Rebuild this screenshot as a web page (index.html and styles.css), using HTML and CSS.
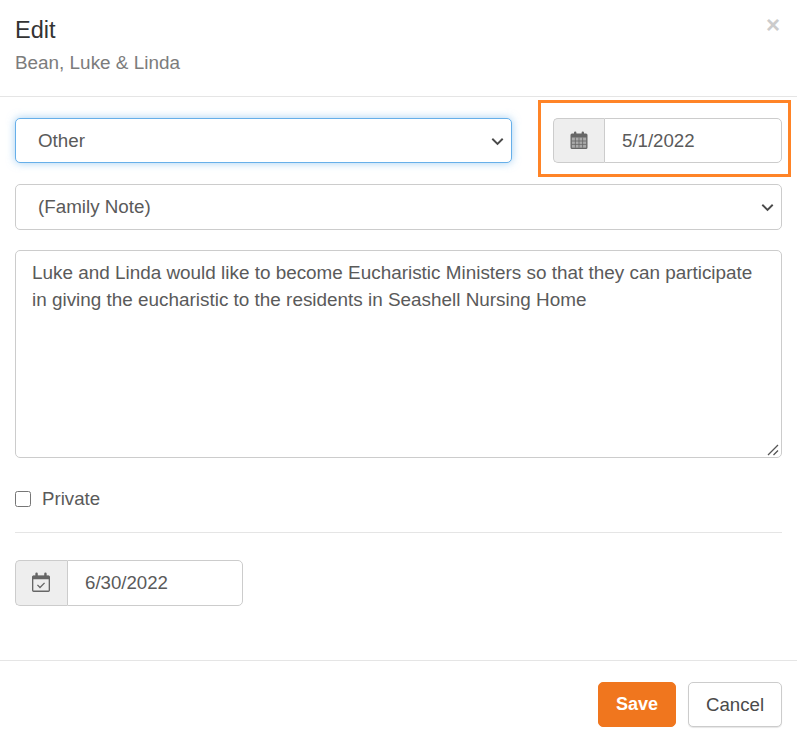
FILE: index.html
```html
<!DOCTYPE html>
<html lang="en">
<head>
  <meta charset="UTF-8">
  <meta name="viewport" content="width=device-width, initial-scale=1.0">
  <title>Edit</title>
  <link rel="stylesheet" href="styles.css">
</head>
<body>
  <div class="modal">
    <div class="modal-header">
      <div>
        <h4>Edit</h4>
        <div class="subtitle">Bean, Luke &amp; Linda</div>
      </div>
      <span class="close">&times;</span>
    </div>

    <div class="modal-body">
      <div class="top-row">
        <div class="select-wrap">
          <select class="field focused">
            <option>Other</option>
          </select>
          <svg class="chevron" viewBox="0 0 12 8"><path d="M1.200 1.500 6 6.200l4.800-4.700" /></svg>
        </div>

        <div class="date-group date-first">
          <span class="addon">
            <svg viewBox="0 0 18 18"><path class="solid" d="M2 2.500h2V1.800a1.200 1.200 0 0 1 2.400 0v.7h5.200v-.7a1.200 1.200 0 0 1 2.400 0v.7h2A1.500 1.500 0 0 1 17.500 4v12.500A1.500 1.500 0 0 1 16 18H2a1.500 1.500 0 0 1-1.500-1.500V4A1.500 1.500 0 0 1 2 2.500Z" /><path class="grid-bg" d="M1.800 6.500h14.400v10.200H1.800Z" /><path class="grid" d="M1.800 10h14.400M1.800 13.400h14.400M5.400 6.500v10.200M9 6.500v10.200M12.600 6.500v10.200" /></svg>
          </span>
          <input class="field" type="text" value="5/1/2022">
        </div>
      </div>

      <div class="select-wrap note-select">
        <select class="field">
          <option>(Family Note)</option>
        </select>
        <svg class="chevron" viewBox="0 0 12 8"><path d="M1.200 1.500 6 6.200l4.800-4.700" /></svg>
      </div>

      <div class="note-wrap">
        <textarea class="field note-text">Luke and Linda would like to become Eucharistic Ministers so that they can participate in giving the eucharistic to the residents in Seashell Nursing Home</textarea>
        <svg class="grip" viewBox="0 0 12 12"><path d="M1 11 11 1M6.500 11 11 6.500" /></svg>
      </div>

      <label class="private">
        <input type="checkbox">
        Private
      </label>

      <hr>

      <div class="date-group date-second">
        <span class="addon">
          <svg viewBox="0 0 18 18"><path class="outline" d="M2.300 3.700h13.400a.8.8 0 0 1 .8.800v12a.8.8 0 0 1-.8.800H2.300a.8.8 0 0 1-.8-.8v-12a.8.8 0 0 1 .8-.8Z" /><path class="solid" d="M1.500 3.300h15v3.200h-15ZM3.900 1.500a1.100 1.100 0 0 1 2.200 0V4H3.900ZM11.900 1.500a1.100 1.100 0 0 1 2.200 0V4h-2.200Z" /><path class="outline" d="m5.800 11.600 2.300 2.300 4.100-4.100" /></svg>
        </span>
        <input class="field" type="text" value="6/30/2022">
      </div>
    </div>

    <div class="modal-footer">
      <button class="btn btn-save">Save</button>
      <button class="btn btn-cancel">Cancel</button>
    </div>
  </div>

  <div class="highlight"></div>
</body>
</html>
```

FILE: styles.css
```css
* {
  box-sizing: border-box;
}

body {
  margin: 0;
  background-color: #fff;
  font-family: "Liberation Sans", Arial, sans-serif;
  font-size: 18.67px;
  color: #5a5a5a;
}

.modal {
  width: 797px;
  height: 741px;
  display: flex;
  flex-direction: column;
}

.modal-header {
  height: 97px;
  padding: 17px 15px 0;
  display: flex;
  justify-content: space-between;
  border-bottom: 1px solid #e5e5e5;
}

h4 {
  margin: 0;
  font-size: 23.5px;
  font-weight: 400;
  line-height: 26px;
  color: #333;
}

.subtitle {
  margin-top: 8px;
  font-size: 18.9px;
  line-height: 24px;
  color: #7c7c7c;
}

.close {
  margin: -4px 2px 0 0;
  font-size: 24px;
  font-weight: 700;
  line-height: 24px;
  color: #ccc;
}

.modal-body {
  flex: 1;
  padding: 21px 15px 0;
}

.top-row {
  display: flex;
  justify-content: space-between;
  margin-bottom: 21px;
}

.field {
  display: block;
  width: 100%;
  height: 46px;
  padding: 0 22px;
  border: 1px solid #ccc;
  border-radius: 5px;
  background-color: #fff;
  font-family: inherit;
  font-size: 18.8px;
  color: #5a5a5a;
  outline: none;
}

select.field {
  appearance: none;
}

.note-select .field {
  padding-bottom: 2px;
}

.focused {
  height: 45px;
  border-color: #66afe9;
  box-shadow: 0 0 8px rgba(102, 175, 233, 0.6);
}

.select-wrap {
  position: relative;
  width: 497px;
}

.note-select {
  width: 100%;
  margin-bottom: 20px;
}

.chevron {
  position: absolute;
  right: 8px;
  top: 50%;
  width: 13px;
  height: 9px;
  margin-top: -4px;
  fill: none;
  stroke: #4a4a4a;
  stroke-width: 1.800;
  pointer-events: none;
}

.date-group {
  display: flex;
}

.date-first {
  width: 229px;
  height: 45px;
}

.date-second {
  width: 228px;
  height: 46px;
}

.date-group .field {
  flex: 1;
  min-width: 0;
  height: 100%;
  padding: 0 17px;
  border-radius: 0 5px 5px 0;
  font-size: 18.67px;
}

.addon {
  flex: none;
  display: flex;
  align-items: center;
  justify-content: center;
  width: 52px;
  border: 1px solid #ccc;
  border-right: 0;
  border-radius: 5px 0 0 5px;
  background-color: #eee;
}

.date-first .addon {
  width: 51px;
}

.addon svg {
  width: 18px;
  height: 18px;
}

.date-first .addon svg {
  margin-bottom: 2px;
}

.date-second .addon svg {
  width: 20px;
  height: 20px;
  margin: 0 1px 2px 0;
}

.solid {
  fill: #666;
}

.grid-bg {
  fill: #aaa;
}

.grid {
  fill: none;
  stroke: #666;
  stroke-width: 0.800;
}

.outline {
  fill: none;
  stroke: #666;
  stroke-width: 1.200;
}

.note-wrap {
  position: relative;
}

.note-text {
  height: 208px;
  padding: 8px 22px 8px 16px;
  font-size: 18.9px;
  line-height: 27px;
  resize: none;
}

/* stands in for the browser's resize handle */
.grip {
  position: absolute;
  right: 3px;
  bottom: 2px;
  width: 12px;
  height: 12px;
  fill: none;
  stroke: #555;
  stroke-width: 1.300;
}

.private {
  display: flex;
  align-items: center;
  gap: 11px;
  margin-top: 29px;
  line-height: 24px;
}

.private input {
  width: 16px;
  height: 16px;
  margin: 0;
}

hr {
  margin: 21px 0 27px;
  border: 0;
  border-top: 1px solid #e5e5e5;
}

.modal-footer {
  height: 81px;
  padding: 21px 15px 0;
  display: flex;
  justify-content: flex-end;
  align-items: flex-start;
  gap: 12px;
  border-top: 1px solid #e5e5e5;
}

.btn {
  height: 45px;
  border: 1px solid #ccc;
  border-radius: 5px;
  background-color: #fff;
  font-family: inherit;
  font-size: 18.67px;
  color: #4a4a4a;
}

.btn-save {
  width: 78px;
  border-color: #f0761e;
  background-color: #f0761e;
  font-size: 18px;
  font-weight: 700;
  color: #fff;
}

.btn-cancel {
  width: 94px;
  box-shadow: 0 1px 1px rgba(0, 0, 0, 0.1);
}

/* annotation box drawn over the date field */
.highlight {
  position: absolute;
  left: 538px;
  top: 100px;
  width: 253px;
  height: 77px;
  border: 3px solid #ff8427;
  pointer-events: none;
}
```
